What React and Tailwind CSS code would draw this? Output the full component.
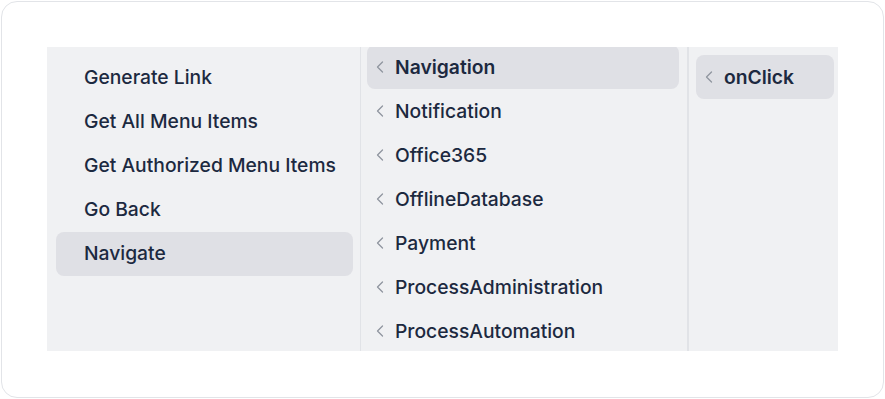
import { ChevronLeft } from 'lucide-react';

const actions = ['Generate Link', 'Get All Menu Items', 'Get Authorized Menu Items', 'Go Back', 'Navigate'];
const modules = [
  'Navigation',
  'Notification',
  'Office365',
  'OfflineDatabase',
  'Payment',
  'ProcessAdministration',
  'ProcessAutomation',
];

function Row({ label, active, chevron, bold }) {
  return (
    <div
      className={`flex h-[44px] shrink-0 items-center rounded-lg ${chevron ? 'pl-[3px]' : 'pl-[28px]'} ${
        active ? 'bg-[#dfe0e5]' : ''
      }`}
    >
      {chevron && <ChevronLeft size={20} strokeWidth={1.5} className="mr-[5px] shrink-0 text-[#8f959f]" />}
      <span
        className={`text-[19.3px] whitespace-nowrap text-[#1c2940] ${chevron ? '' : '-mt-px'} ${
          bold ? 'font-semibold' : 'font-medium'
        }`}
      >
        {label}
      </span>
    </div>
  );
}

export default function App() {
  return (
    <div className="h-[399px] w-[885px] bg-white p-px" style={{ fontFamily: 'Inter, "Noto Sans", sans-serif' }}>
      <div className="h-[397px] w-[883px] rounded-2xl border border-[#e2e4e8] bg-white pl-[45px] pt-[45px]">
        <div className="flex h-[304px] w-[791px] bg-[#f0f1f3]">
          {/* actions */}
          <div className="flex w-[314px] flex-col border-r border-[#e1e3e7] pl-[9px] pr-[7px] pt-[9px]">
            {actions.map((a) => (
              <Row key={a} label={a} active={a === 'Navigate'} />
            ))}
          </div>

          {/* modules */}
          <div className="w-[328px] overflow-hidden border-r-2 border-[#e1e3e7] pl-[6px] pr-[8px]">
            <div className="-mt-[2px] flex flex-col">
              {modules.map((m) => (
                <Row key={m} label={m} chevron active={m === 'Navigation'} bold={m === 'Navigation'} />
              ))}
            </div>
          </div>

          {/* events */}
          <div className="flex flex-1 flex-col pl-[7px] pr-[4px] pt-[8px]">
            <Row label="onClick" chevron active bold />
          </div>
        </div>
      </div>
    </div>
  );
}
